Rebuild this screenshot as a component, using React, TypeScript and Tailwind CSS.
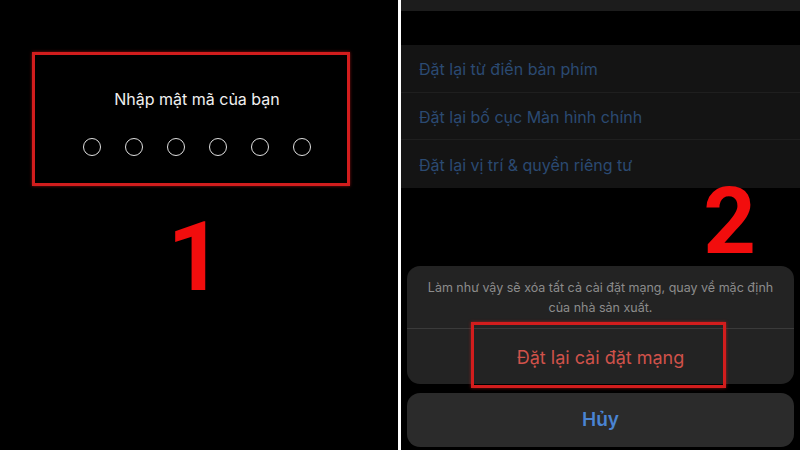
import React from "react";

export default function App() {
  const circles = [0, 1, 2, 3, 4, 5];
  const rows = [
    "Đặt lại từ điển bàn phím",
    "Đặt lại bố cục Màn hình chính",
    "Đặt lại vị trí & quyền riêng tư",
  ];
  return (
    <div
      className="w-[800px] h-[450px] flex bg-black overflow-hidden"
      style={{ fontFamily: "Inter, 'Noto Sans', sans-serif" }}
    >
      {/* Left panel */}
      <div className="w-[398px] h-full bg-black flex flex-col shrink-0">
        <div className="ml-[32px] mt-[52px] w-[318px] h-[134px] border-[3px] border-[#d21d1d] shadow-[0_0_3px_rgba(220,30,30,0.6)] flex flex-col items-center pl-[12px]">
          <div className="mt-[32px] text-[16px] leading-[24px] text-[#f0f0f0]">
            Nhập mật mã của bạn
          </div>
          <div className="mt-[27px] flex gap-[24px]">
            {circles.map((i) => (
              <div
                key={i}
                className="w-[18px] h-[18px] rounded-full border-[1.5px] border-[#e0e0e0]"
              />
            ))}
          </div>
        </div>
        <div
          className="mt-[23px] pr-[8px] text-center text-[97px] leading-none font-bold text-[#f20d0d]"
          style={{ fontFamily: "Roboto, 'Liberation Sans', sans-serif" }}
        >
          1
        </div>
      </div>

      {/* Divider */}
      <div className="w-[3px] h-full bg-white shrink-0" />

      {/* Right panel */}
      <div className="flex-1 h-full bg-black flex flex-col">
        <div className="h-[11px] bg-[#1c1c1c]" />
        <div className="h-[34px]" />
        <div className="h-[143px] bg-[#141414] flex flex-col">
          {rows.map((r, i) => (
            <div
              key={r}
              className={`h-[48px] flex items-center pl-[18px] pt-[2px] text-[16px] text-[#2b4a72] ${
                i < 2 ? "border-b border-[#1f1f1f]" : ""
              }`}
            >
              {r}
            </div>
          ))}
        </div>
        <div className="h-[78px] flex justify-end pr-[44px]">
          <div
            className="mt-[1px] h-[66px] text-[92px] leading-[66px] font-bold text-[#f20d0d]"
            style={{ fontFamily: "Roboto, 'Liberation Sans', sans-serif" }}
          >
            2
          </div>
        </div>
        <div className="relative mx-[6px] h-[118px] rounded-[13px] bg-[#232323] flex flex-col">
          <div className="h-[62px] pt-[12px] text-center text-[12.5px] leading-[20px] text-[#8c8c8c]">
            Làm như vậy sẽ xóa tất cả cài đặt mạng, quay về mặc định
            <br />
            của nhà sản xuất.
          </div>
          <div className="h-px bg-[#3a3a3a]" />
          <div className="flex-1 flex items-center justify-center pt-[2px] text-[18px] text-[#d0524a]">
            Đặt lại cài đặt mạng
          </div>
          <div className="absolute left-[64px] top-[56px] w-[255px] h-[66px] border-[3px] border-[#d21d1d] shadow-[0_0_3px_rgba(220,30,30,0.6)]" />
        </div>
        <div className="mx-[6px] mt-[9px] h-[54px] rounded-[13px] bg-[#2b2b2b] flex items-center justify-center text-[19px] font-semibold text-[#4a84d3]">
          Hủy
        </div>
      </div>
    </div>
  );
}
